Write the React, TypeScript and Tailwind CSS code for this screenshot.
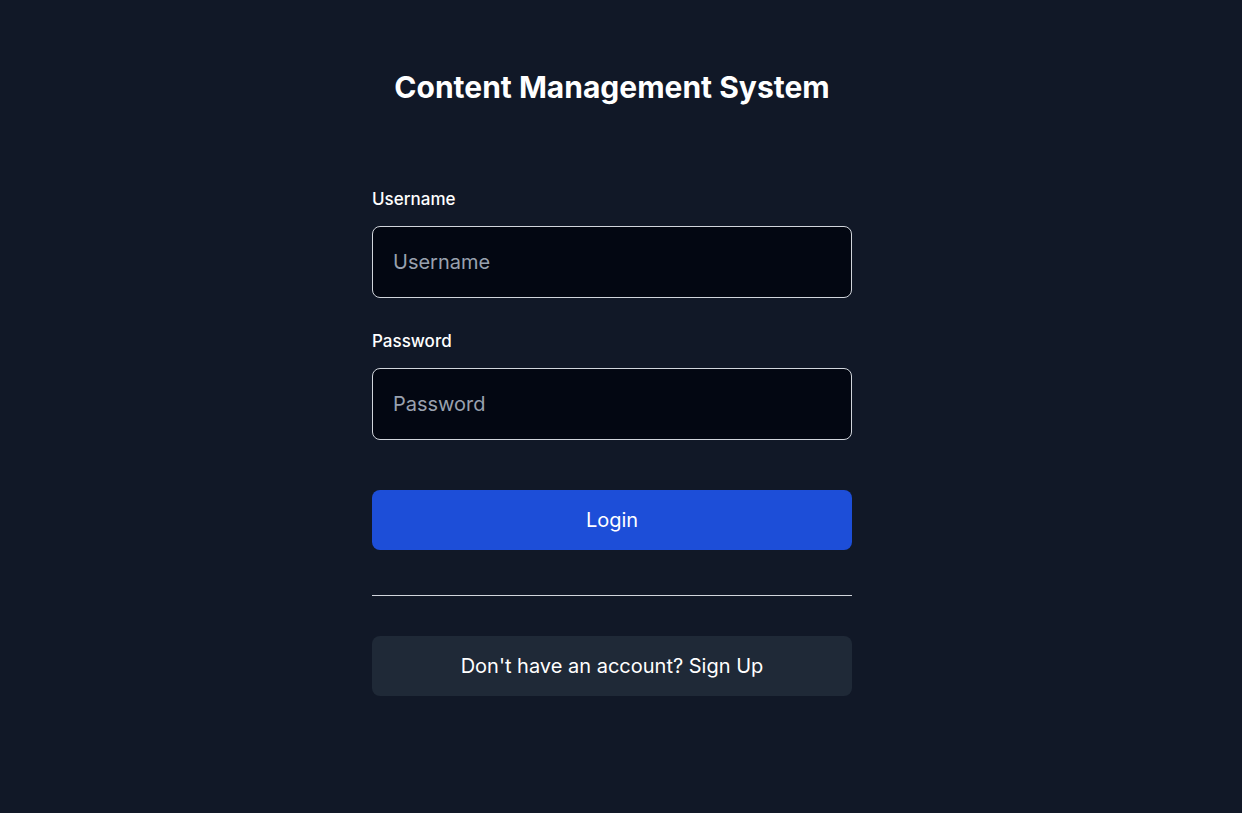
export default function App() {
  return (
    <div className="min-h-screen bg-[#111827] text-white font-['Inter',sans-serif] flex flex-col items-center pr-[18px]">
      <h1 className="mt-[69px] text-3xl font-bold leading-9">Content Management System</h1>

      <form className="w-[480px] mt-[82px] flex flex-col" onSubmit={(e) => e.preventDefault()}>
        <label className="text-[17px] font-medium leading-6">Username</label>
        <input
          type="text"
          placeholder="Username"
          className="mt-[15px] h-[72px] px-5 rounded-lg border border-gray-300 bg-[#030712] text-xl text-white placeholder:text-gray-400 outline-none"
        />

        <label className="mt-[31px] text-[17px] font-medium leading-6">Password</label>
        <input
          type="password"
          placeholder="Password"
          className="mt-[15px] h-[72px] px-5 rounded-lg border border-gray-300 bg-[#030712] text-xl text-white placeholder:text-gray-400 outline-none"
        />

        <button
          type="submit"
          className="mt-[50px] h-[60px] rounded-lg bg-[#1d4ed8] text-xl text-white"
        >
          Login
        </button>

        <div className="mt-[45px] h-px bg-gray-300" />

        <button type="button" className="mt-10 h-[60px] rounded-lg bg-[#1f2937] text-xl text-white">
          Don't have an account? Sign Up
        </button>
      </form>
    </div>
  );
}
